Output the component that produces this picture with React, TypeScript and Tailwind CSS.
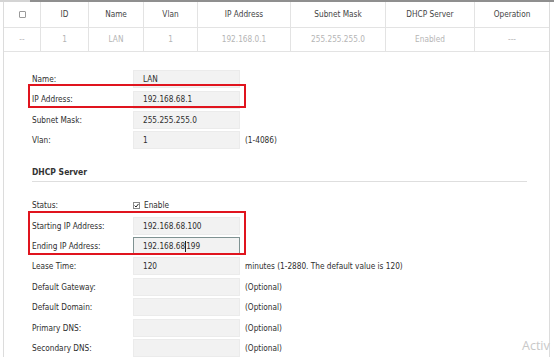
import React from 'react';

const columns = [
  { key: 'check', label: '', w: 'w-[37px]' },
  { key: 'id', label: 'ID', w: 'w-[48px]' },
  { key: 'name', label: 'Name', w: 'w-[55px]' },
  { key: 'vlan', label: 'Vlan', w: 'w-[54px]' },
  { key: 'ip', label: 'IP Address', w: 'w-[93px]' },
  { key: 'mask', label: 'Subnet Mask', w: 'w-[95px]' },
  { key: 'dhcp', label: 'DHCP Server', w: 'w-[89px]' },
  { key: 'op', label: 'Operation', w: 'flex-1' },
];

const dataRow: Record<string, string> = {
  check: '--',
  id: '1',
  name: 'LAN',
  vlan: '1',
  ip: '192.168.0.1',
  mask: '255.255.255.0',
  dhcp: 'Enabled',
  op: '---',
};

const FormRow: React.FC<{
  label: string;
  value?: string;
  hint?: string;
  focused?: boolean;
  children?: React.ReactNode;
}> = ({ label, value, hint, focused, children }) => (
  <div className="flex items-center h-[20.4px]">
    <div className="w-[101px] text-[#2e2e2e]">{label}</div>
    {children ?? (
      <div
        className={`w-[107px] h-[18px] flex items-center pl-[9px] bg-[#f2f2f2] border ${
          focused ? 'border-[#7f9292]' : 'border-[#ebebeb]'
        } text-[#2e2e2e]`}
      >
        {value}
        {focused && <span className="w-px h-[11px] bg-[#222]" />}
        {focused && <span>199</span>}
      </div>
    )}
    {hint && <div className="ml-[5px] text-[#2e2e2e]">{hint}</div>}
  </div>
);

export default function App() {
  return (
    <div
      className="relative w-[554px] h-[357px] overflow-hidden bg-white text-[8.2px] leading-none"
      style={{ fontFamily: '"DejaVu Sans Condensed", "DejaVu Sans", sans-serif' }}
    >
      {/* top strip */}
      <div className="flex h-[2px]">
        <div className="w-[30px] bg-[#d4d4d4]" />
        <div className="flex-1 bg-[#8f8f8f]" />
      </div>

      <div className="ml-[3px] w-[547px] h-[355px] border-l border-r border-[#dcdcdc]">
        {/* table header */}
        <div className="flex h-[26px] border-b border-[#e3e3e3]">
          {columns.map((c) => (
            <div
              key={c.key}
              className={`${c.w} flex items-center justify-center border-r border-[#e3e3e3] last:border-r-0 text-[#444]`}
            >
              {c.key === 'check' ? (
                <span className="w-[7px] h-[7px] border border-[#9a9a9a] rounded-[1px]" />
              ) : (
                c.label
              )}
            </div>
          ))}
        </div>
        {/* table data */}
        <div className="flex h-[24px] border-b border-[#e3e3e3]">
          {columns.map((c) => (
            <div
              key={c.key}
              className={`${c.w} flex items-center justify-center border-r border-[#e3e3e3] last:border-r-0 text-[#b5b5b5]`}
            >
              {dataRow[c.key]}
            </div>
          ))}
        </div>

        {/* form */}
        <div className="relative pl-[28px] pt-[17px]">
          <FormRow label="Name:" value="LAN" />
          <FormRow label="IP Address:" value="192.168.68.1" />
          <FormRow label="Subnet Mask:" value="255.255.255.0" />
          <FormRow label="Vlan:" value="1" hint="(1-4086)" />

          <div className="mt-[17px] w-[495px] pb-[5px] border-b border-[#dedede] font-bold text-[#333] text-[8.5px]">
            DHCP Server
          </div>

          <div className="mt-[13px]">
            <FormRow label="Status:">
              <div className="flex items-center gap-[4px] text-[#2e2e2e]">
                <span className="w-[7px] h-[7px] border border-[#8a8a8a] bg-white flex items-center justify-center">
                  <svg width="5" height="5" viewBox="0 0 5 5">
                    <path d="M0.6 2.6 L2 4 L4.5 0.9" fill="none" stroke="#222" strokeWidth="1" />
                  </svg>
                </span>
                Enable
              </div>
            </FormRow>
            <FormRow label="Starting IP Address:" value="192.168.68.100" />
            <FormRow label="Ending IP Address:" value="192.168.68" focused />
            <FormRow label="Lease Time:" value="120" hint="minutes (1-2880. The default value is 120)" />
            <FormRow label="Default Gateway:" hint="(Optional)" />
            <FormRow label="Default Domain:" hint="(Optional)" />
            <FormRow label="Primary DNS:" hint="(Optional)" />
            <FormRow label="Secondary DNS:" hint="(Optional)" />
          </div>

          {/* annotation boxes */}
          <div className="absolute left-[24px] top-[32px] w-[218px] h-[24px] border-[2.5px] border-[#e0141e]" />
          <div className="absolute left-[24px] top-[159px] w-[218px] h-[44px] border-[2.5px] border-[#e0141e]" />
        </div>
      </div>

      {/* activation watermark */}
      <div
        className="absolute left-[522px] top-[340px] whitespace-nowrap text-[12.5px] text-[#c8c8c8]"
        style={{ fontFamily: '"Open Sans", sans-serif' }}
      >
        Activ
      </div>
    </div>
  );
}
